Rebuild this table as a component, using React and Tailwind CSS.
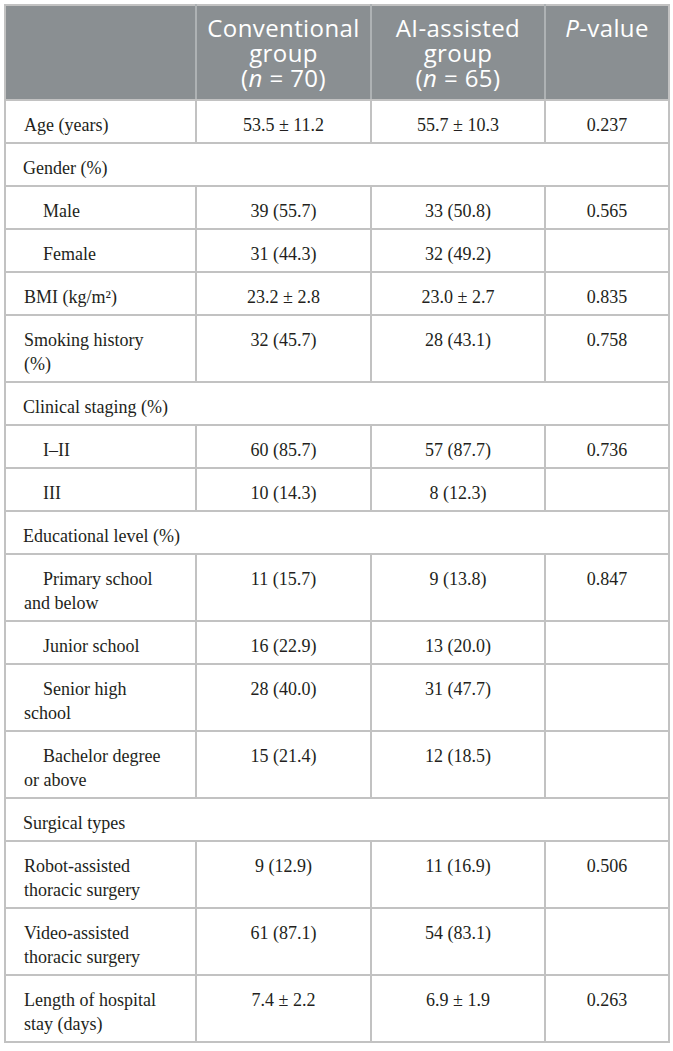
const rows = [
  { type: "row", label: "Age (years)", a: "53.5 ± 11.2", b: "55.7 ± 10.3", p: "0.237" },
  { type: "section", label: "Gender (%)" },
  { type: "row", sub: true, label: "Male", a: "39 (55.7)", b: "33 (50.8)", p: "0.565" },
  { type: "row", sub: true, label: "Female", a: "31 (44.3)", b: "32 (49.2)", p: "" },
  { type: "row", label: <>BMI (kg/m²)</>, a: "23.2 ± 2.8", b: "23.0 ± 2.7", p: "0.835" },
  { type: "row", label: <>Smoking history<br />(%)</>, a: "32 (45.7)", b: "28 (43.1)", p: "0.758" },
  { type: "section", label: "Clinical staging (%)" },
  { type: "row", sub: true, label: "I–II", a: "60 (85.7)", b: "57 (87.7)", p: "0.736" },
  { type: "row", sub: true, label: "III", a: "10 (14.3)", b: "8 (12.3)", p: "" },
  { type: "section", label: "Educational level (%)" },
  { type: "row", sub: true, label: <>Primary school<br />and below</>, a: "11 (15.7)", b: "9 (13.8)", p: "0.847" },
  { type: "row", sub: true, label: "Junior school", a: "16 (22.9)", b: "13 (20.0)", p: "" },
  { type: "row", sub: true, label: <>Senior high<br />school</>, a: "28 (40.0)", b: "31 (47.7)", p: "" },
  { type: "row", sub: true, label: <>Bachelor degree<br />or above</>, a: "15 (21.4)", b: "12 (18.5)", p: "" },
  { type: "section", label: "Surgical types" },
  { type: "row", label: <>Robot-assisted<br />thoracic surgery</>, a: "9 (12.9)", b: "11 (16.9)", p: "0.506" },
  { type: "row", label: <>Video-assisted<br />thoracic surgery</>, a: "61 (87.1)", b: "54 (83.1)", p: "" },
  { type: "row", label: <>Length of hospital<br />stay (days)</>, a: "7.4 ± 2.2", b: "6.9 ± 1.9", p: "0.263" },
];

const cell = "border-2 border-[#c2c2c2] align-top pt-[12px] pb-[5px] leading-[24px]";

function HeadLines({ lines }) {
  return lines.map((l, i) => (
    <div key={i} className="h-[25px] leading-[25px]">
      {l}
    </div>
  ));
}

export default function App() {
  return (
    <div className="bg-white min-h-[1051px] pl-[4px] pt-[4px]">
      <table
        className="border-collapse table-fixed w-[664px] text-[18px] text-[#231f20]"
        style={{ fontFamily: '"Liberation Serif", "Times New Roman", serif' }}
      >
        <colgroup>
          <col className="w-[191px]" />
          <col className="w-[175px]" />
          <col className="w-[174px]" />
          <col className="w-[124px]" />
        </colgroup>
        <thead>
          <tr
            className="bg-[#8a8f92] text-white text-[24px] leading-[25px] tracking-[0.4px]"
            style={{ fontFamily: '"Open Sans", "Noto Sans", sans-serif' }}
          >
            <th className="border-2 border-[#c2c2c2] border-r-[#aeb2b4] h-[95px]"></th>
            <th className="border-2 border-[#c2c2c2] border-r-[#aeb2b4] align-top pt-[9px] font-normal">
              <HeadLines lines={["Conventional", "group", <>(<i>n</i> = 70)</>]} />
            </th>
            <th className="border-2 border-[#c2c2c2] border-r-[#aeb2b4] align-top pt-[9px] font-normal">
              <HeadLines lines={["AI-assisted", "group", <>(<i>n</i> = 65)</>]} />
            </th>
            <th className="border-2 border-[#c2c2c2] align-top pt-[9px] font-normal">
              <HeadLines lines={[<><i>P</i>-value</>]} />
            </th>
          </tr>
        </thead>
        <tbody>
          {rows.map((r, i) =>
            r.type === "section" ? (
              <tr key={i}>
                <td colSpan={4} className={`${cell} pl-[17px]`}>
                  {r.label}
                </td>
              </tr>
            ) : (
              <tr key={i}>
                <td className={`${cell} pl-[18px] pr-2 ${r.sub ? "indent-[19px]" : ""}`}>
                  {r.label}
                </td>
                <td className={`${cell} text-center`}>{r.a}</td>
                <td className={`${cell} text-center`}>{r.b}</td>
                <td className={`${cell} text-center`}>{r.p}</td>
              </tr>
            )
          )}
        </tbody>
      </table>
    </div>
  );
}
